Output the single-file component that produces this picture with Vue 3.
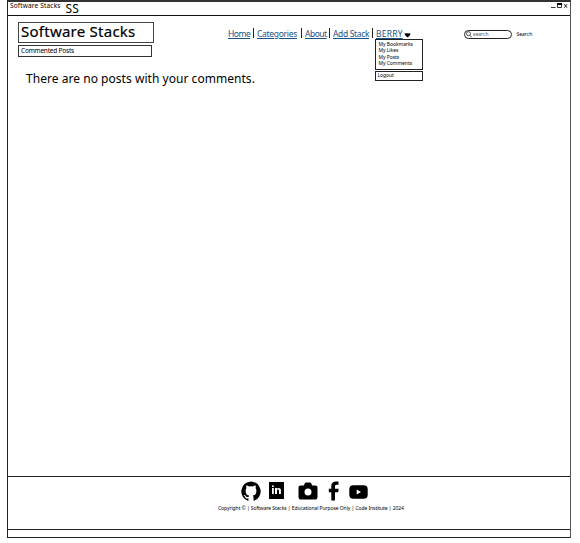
<script setup>
const links = ['Home', 'Categories', 'About', 'Add Stack']
const account = ['My Bookmarks', 'My Likes', 'My Posts', 'My Comments']
</script>

<template>
  <div class="window">
    <header class="titlebar">
      <span class="title">Software Stacks</span>
      <span class="initials">SS</span>
      <svg class="controls" width="18" height="8" viewBox="0 0 18 8">
        <path d="M0 5.500h4.500" stroke="#333" />
        <path d="M6.500 2.500h4v3h-4z" fill="none" stroke="#333" /><path d="M6 2h5" stroke="#000" stroke-width="2" />
        <path d="M13.300 2.200l2.700 3.500M16 2.200l-2.700 3.500" stroke="#222" />
      </svg>
    </header>

    <main class="page">
      <div class="top">
        <div class="brand">
          <h1>Software Stacks</h1>
          <div class="crumb">Commented Posts</div>
        </div>
        <nav>
          <div class="links">
            <template v-for="(link, i) in links" :key="link">
              <span :class="'link-' + i"><a>{{ link }}</a></span><i class="bar"></i>
            </template>
            <span class="user"><a>BERRY</a></span>
            <svg class="caret" width="7" height="5" viewBox="0 0 7 5"><path d="M.3.6Q3.5 0 6.7.6 6.3 2.5 3.7 4.6 1 2.8.3.6z" /></svg>
          </div>
          <div class="menu">
            <span v-for="item in account" :key="item">{{ item }}</span>
          </div>
          <div class="menu logout"><span>Logout</span></div>
        </nav>
        <div class="search">
          <div class="field">
            <svg width="6" height="7" viewBox="0 0 6 7"><circle cx="2.5" cy="2.7" r="2" /><path d="M4 4.3l1.7 2" /></svg>
            <span>search</span>
          </div>
          <span class="go">Search</span>
        </div>
      </div>
      <p class="empty">There are no posts with your comments.</p>
    </main>

    <footer class="footer">
      <div class="social">
        <svg class="github" width="20" height="20" viewBox="0 0 16 16"><path d="M8 .3a8 8 0 0 0-2.5 15.500c.4.1.5-.2.5-.4v-1.500c-2.100.5-2.600-1-2.600-1-.4-.9-.9-1.200-.9-1.200-.7-.5.1-.5.1-.5.8.1 1.200.8 1.200.8.7 1.200 1.900.9 2.300.7.1-.5.3-.9.5-1.100-1.600-.2-2.900-1.100-2.900-3.700 0-1 .2-1.700.7-2.300-.2-.4-.4-1.100 0-2 .8 0 1.500.4 2.100.8a6.500 6.500 0 0 1 3 0c.6-.4 1.300-.8 2.100-.8.4.9.2 1.600 0 2 .5.6.7 1.300.7 2.300 0 2.600-1.300 3.500-2.900 3.700.3.3.6.8.6 1.500v2.300c0 .2.1.5.5.4A8 8 0 0 0 8 .3z" /></svg>
        <svg class="linkedin" width="15" height="17" viewBox="0 0 15 17"><path d="M0 0h15v17H0z" /><path d="M3 6h1.800v6H3zM3 3.500h1.800v1.500H3zM6 6h1.900v.8c1-1.400 4-1.200 4 1.300V12h-1.900V8.700c0-1.600-2-1.400-2 0V12H6z" fill="#fff" /></svg>
        <svg class="camera" width="20" height="18" viewBox="0 0 20 18"><path d="M2.500 3.500h3.300l1-2.200Q7.200.5 8 .5h4q.8 0 1.200.8l1 2.200h3.300q2 0 2 2v9.500q0 2.500-2 2.500h-15q-2 0-2-2.500V5.500q0-2 2-2z" /><circle cx="10" cy="10" r="3.500" fill="#fff" /></svg>
        <svg class="facebook" width="12" height="20" viewBox="0 0 12 20"><path d="M3.300 19.500V11.300H.8V7.800h2.500V5.200C3.300 2 5.200.5 7.800.5c1.300 0 2.700.2 2.700.2v3.100H8.800C7.400 3.800 7 4.600 7 5.600v2.200h3.700l-.5 3.500H7v8.200z" /></svg>
        <svg class="youtube" width="19" height="14" viewBox="0 0 19 14"><rect x=".3" y=".3" width="18.400" height="13.400" rx="4" /><path d="M7.700 4.500v5L12 7z" fill="#fff" /></svg>
      </div>
      <div class="copy">Copyright © | Software Stacks | Educational Purpose Only | Code Institute | 2024</div>
    </footer>
    <div class="status"></div>
  </div>
</template>

<style>
body { background: #fff; }
</style>

<style scoped>
.window {
  box-sizing: border-box;
  display: flex;
  flex-direction: column;
  width: 564px;
  height: 538px;
  margin: 0 0 0 7px;
  border: 1px solid #222;
  border-top: 2px solid #333;
  border-right-color: #555;
  font-family: "Noto Sans", "Open Sans", sans-serif;
  color: #000;
  white-space: nowrap;
}
.titlebar {
  display: flex;
  align-items: flex-start;
  height: 13px;
  border-bottom: 1px solid #111;
}
.title { margin-left: 2px; font-size: 6.5px; line-height: 8px; letter-spacing: 0.17px; }
.initials { margin-left: 5px; font-size: 12px; line-height: 13px; }
.controls { margin: 0 1px 0 auto; }
.page { flex: 1; }
.top { display: flex; height: 54px; }
.brand { width: 137px; margin: 6px 0 0 10px; }
h1 {
  box-sizing: border-box;
  height: 21px;
  width: 136px;
  margin: 0;
  padding-left: 2px;
  border: 1px solid #444;
  font-size: 15px;
  line-height: 17px;
  font-weight: 400;
  letter-spacing: 0.25px;
  -webkit-text-stroke: 0.2px #000;
}
.crumb {
  box-sizing: border-box;
  width: 134px;
  height: 12px;
  margin-top: 2px;
  padding-left: 2px;
  border: 1px solid #333;
  font-size: 6.5px;
  line-height: 9px;
  letter-spacing: -0.2px;
}
nav { width: 200px; margin: 12px 0 0 73px; }
.links { display: flex; height: 11px; font-size: 8.5px; line-height: 11px; letter-spacing: -0.3px; }
.links a { color: #1c5285; text-decoration: underline; text-underline-offset: 1px; }
.link-0 { width: 22px; letter-spacing: -0.5px; }
.link-1 { width: 41px; }
.link-2 { width: 21px; letter-spacing: -0.5px; }
.link-3 { width: 36px; letter-spacing: -0.35px; }
.user { width: 27px; letter-spacing: 0.2px; }
.bar { width: 1px; height: 10px; margin: 0 3px; background: #222; }
.caret { margin: 5px 0 0 1px; }
.menu {
  box-sizing: border-box;
  display: flex;
  flex-direction: column;
  width: 48px;
  height: 31px;
  margin: 0 0 0 147px;
  padding: 1px 0 0 2.500px;
  border: 1px solid #222;
  font-size: 5px;
  line-height: 6.3px;
  letter-spacing: -0.05px;
}
.menu.logout { height: 10px; margin-top: 1px; padding: 0 0 0 1.500px; line-height: 7px; }
.search { display: flex; margin: 14px 0 0 36px; font-size: 5px; line-height: 8px; }
.field {
  box-sizing: border-box;
  display: flex;
  width: 48px;
  height: 9px;
  padding-left: 1px;
  border: 1px solid #222;
  border-radius: 5px;
  line-height: 7px;
  color: #555;
}
.field svg { margin-right: 1px; fill: none; stroke: #222; stroke-width: 0.8; }
.go { margin-left: 4.500px; }
.empty { margin: 0 0 0 18px; font-size: 12px; line-height: 18px; letter-spacing: 0.04px; }
.footer { box-sizing: border-box; height: 53px; border-top: 1px solid #222; }
.social { display: flex; align-items: center; height: 27px; padding-left: 232.500px; }
.linkedin { margin-left: 8.500px; }
.camera { margin-left: 13.500px; }
.facebook { margin-left: 10px; }
.youtube { margin: 2px 0 0 9.500px; }
.copy { padding-left: 210px; font-size: 5px; line-height: 9px; letter-spacing: -0.075px; }
.status { height: 7px; border-top: 1px solid #222; }
</style>
